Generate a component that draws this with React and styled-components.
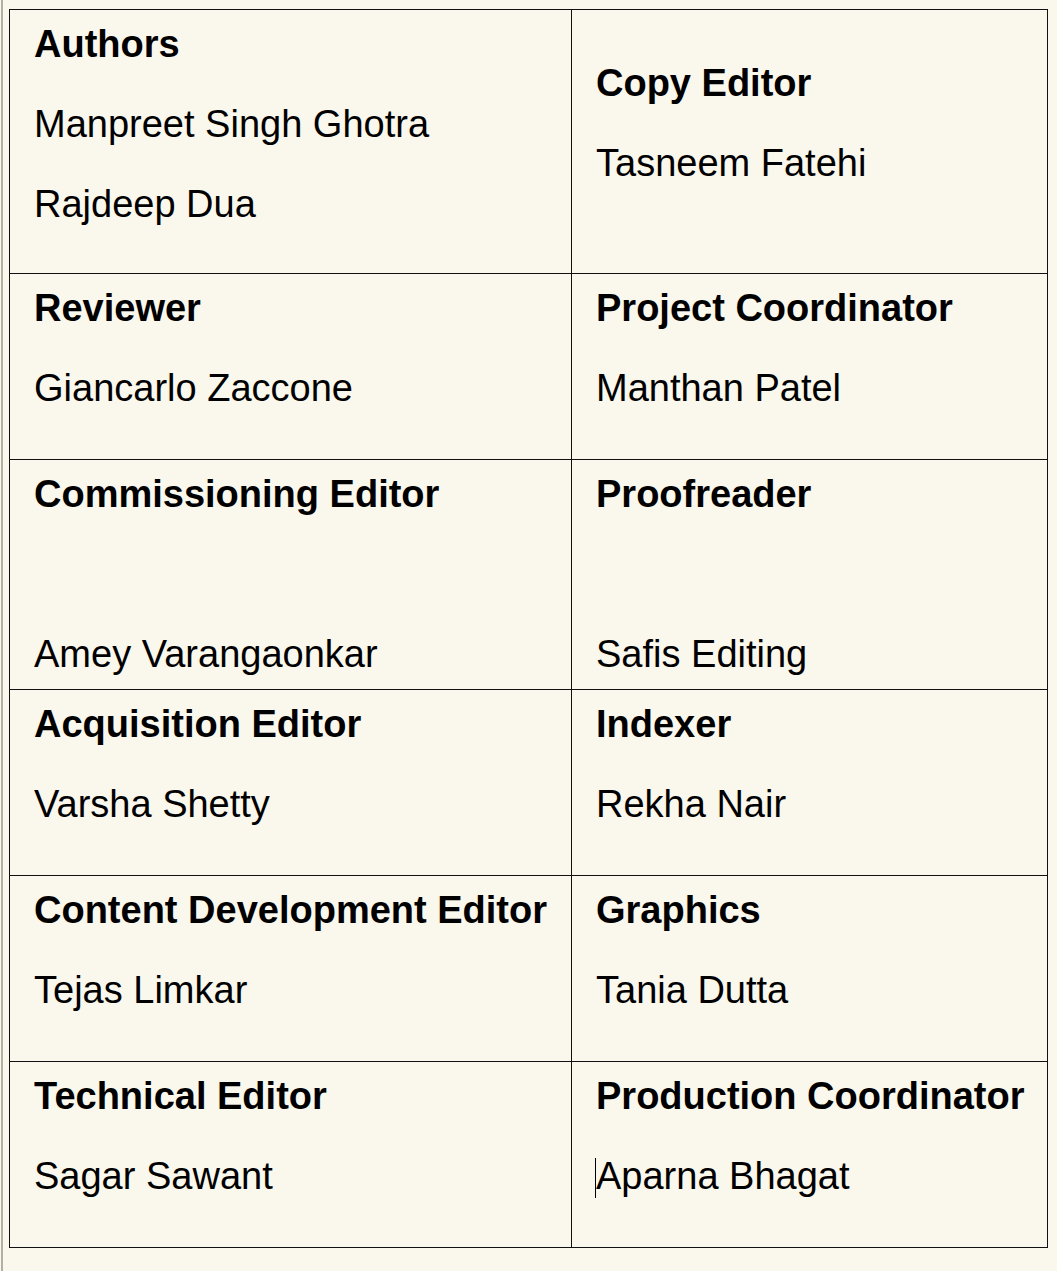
import React from 'react';
import styled, { createGlobalStyle } from 'styled-components';

const credits = [
  [
    { title: 'Authors', names: ['Manpreet Singh Ghotra', 'Rajdeep Dua'] },
    { title: 'Copy Editor', names: ['Tasneem Fatehi'], offset: true },
  ],
  [
    { title: 'Reviewer', names: ['Giancarlo Zaccone'] },
    { title: 'Project Coordinator', names: ['Manthan Patel'] },
  ],
  [
    { title: 'Commissioning Editor', names: ['', 'Amey Varangaonkar'] },
    { title: 'Proofreader', names: ['', 'Safis Editing'] },
  ],
  [
    { title: 'Acquisition Editor', names: ['Varsha Shetty'] },
    { title: 'Indexer', names: ['Rekha Nair'] },
  ],
  [
    { title: 'Content Development Editor', names: ['Tejas Limkar'] },
    { title: 'Graphics', names: ['Tania Dutta'] },
  ],
  [
    { title: 'Technical Editor', names: ['Sagar Sawant'] },
    { title: 'Production Coordinator', names: ['Aparna Bhagat'], caret: true },
  ],
];

const GlobalStyle = createGlobalStyle`
  html, body {
    margin: 0;
    padding: 0;
    background: #faf7ed;
  }
  body {
    font-family: 'Liberation Sans', Arial, sans-serif;
    color: #000;
  }
`;

const Page = styled.div`
  min-height: 1271px;
  margin-left: 1px;
  border-left: 2px solid #b3afa4;
  padding: 9px 0 0 6px;
  box-sizing: border-box;
`;

const Table = styled.div`
  display: grid;
  grid-template-columns: 562px 476px;
  grid-template-rows: 264px 186px 230px 186px 186px 186px;
  width: fit-content;
  border-top: 1px solid #111;
  border-left: 1px solid #111;
`;

const Cell = styled.div`
  box-sizing: border-box;
  border-right: 1px solid #111;
  border-bottom: 1px solid #111;
  padding: ${(p) => (p.$offset ? '52px' : '13px')} 6px 0 24px;
  display: flex;
  flex-direction: column;
  gap: 37px;
  font-size: 38px;
  line-height: 43px;
`;

const Title = styled.div`
  font-weight: 700;
  white-space: nowrap;
`;

const Name = styled.div`
  min-height: 43px;
  white-space: nowrap;
`;

const Caret = styled.span`
  display: inline-block;
  width: 0;
  height: 40px;
  margin-left: -1px;
  border-left: 1px solid #000;
  vertical-align: -9px;
`;

export default function App() {
  return (
    <>
      <GlobalStyle />
      <Page>
        <Table>
          {credits.flat().map((c) => (
            <Cell key={c.title} $offset={c.offset}>
              <Title>{c.title}</Title>
              {c.names.map((n, i) => (
                <Name key={i}>
                  {c.caret && i === 0 && <Caret />}
                  {n}
                </Name>
              ))}
            </Cell>
          ))}
        </Table>
      </Page>
    </>
  );
}
